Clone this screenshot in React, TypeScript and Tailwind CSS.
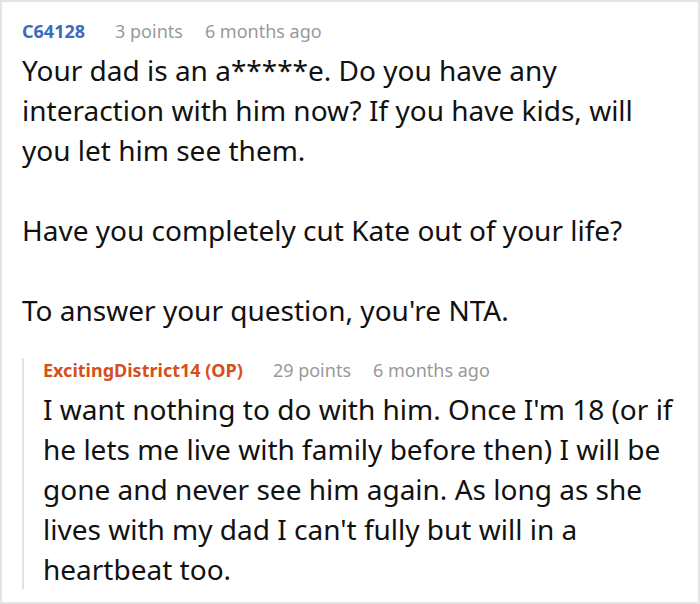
import React from 'react'

const font = { fontFamily: '"Noto Sans", "Open Sans", sans-serif' }

function Meta({ name, points, time, nameClass, className = '' }: { name: string; points: string; time: string; nameClass: string; className?: string }) {
  return (
    <div className={`flex items-center text-[18px] leading-[24px] ${className}`}>
      <span className={`font-bold ${nameClass}`}>{name}</span>
      <span className="ml-[30px] text-[#999999]">{points}</span>
      <span className="ml-[22px] text-[#999999]">{time}</span>
    </div>
  )
}

export default function App() {
  return (
    <div style={font} className="w-[700px] h-[604px] bg-white border-2 border-[#e4e4e4] box-border overflow-hidden">
      <div className="pl-[20px] pr-[22px] pt-[17px]">
        <Meta name="C64128" points="3 points" time="6 months ago" nameClass="text-[#3a6bc0]" />
        <div className="mt-[7px] text-[28px] leading-[40px] text-[#111111]">
          <p>Your dad is an a*****e. Do you have any interaction with him now? If you have kids, will you let him see them.</p>
          <p className="mt-[40px]">Have you completely cut Kate out of your life?</p>
          <p className="mt-[40px]">To answer your question, you're NTA.</p>
        </div>
        <div className="mt-[38px] border-l-2 border-[#e2e2e2] pl-[19px]">
          <Meta className="-mt-[10px]" name="ExcitingDistrict14 (OP)" points="29 points" time="6 months ago" nameClass="text-[#d4501c]" />
          <p className="mt-[7px] text-[28px] leading-[40px] text-[#111111]">
            I want nothing to do with him. Once I'm 18 (or if he lets me live with family before then) I will be gone and never see him again. As long as she lives with my dad I can't fully but will in a heartbeat too.
          </p>
        </div>
      </div>
    </div>
  )
}
